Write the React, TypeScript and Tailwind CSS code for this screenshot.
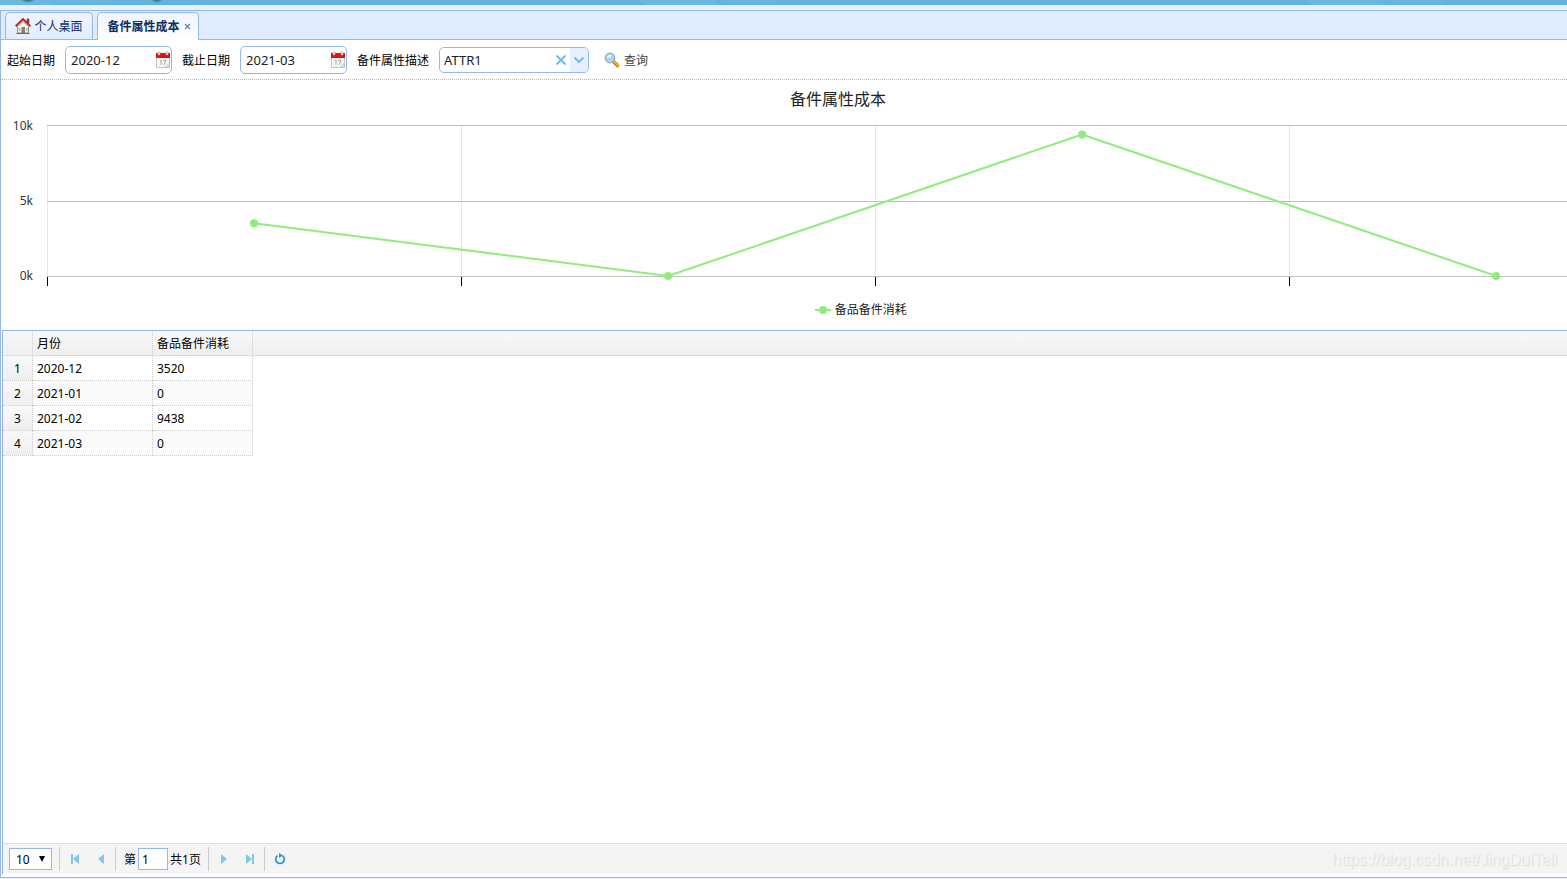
import { useState } from "react";

const rows = [
  { month: "2020-12", cost: 3520 },
  { month: "2021-01", cost: 0 },
  { month: "2021-02", cost: 9438 },
  { month: "2021-03", cost: 0 },
];

/* One category takes this share of the visible plot; the last one runs past the edge. */
const STEP = 27.24;
const PLOT_HEIGHT = 150;

const points = rows.map((row, i) => ({
  x: `${STEP * (i + 0.5)}%`,
  y: 1 + PLOT_HEIGHT - (row.cost / 10000) * PLOT_HEIGHT,
}));

function HomeIcon() {
  return (
    <svg width="16" height="16" viewBox="0 0 16 16" aria-hidden="true">
      <path d="M2.500 8.500v6.500h11V8.500L8 3.500z" fill="#f6f4f0" stroke="#8a8a8a" />
      <path d="M12 1h2v4h-2z" fill="#c0392b" stroke="#8c1b12" strokeWidth=".6" />
      <path d="M4 10h1.500v3H4zM11 10h1.500v3H11z" fill="#b9b3aa" />
      <path d="M6.500 9h3.500v6H6.500z" fill="#8b7d70" />
      <path d="M.7 8.300L8 1.300l7.300 7" fill="none" stroke="#b3261b" strokeWidth="2.200" />
      <path d="M2 8.500L8 2.800l6 5.700" fill="none" stroke="#f3c2b6" strokeWidth=".8" />
      <path d="M1.500 15.500h13" stroke="#666" />
    </svg>
  );
}

function CalendarIcon() {
  return (
    <svg width="16" height="18" viewBox="0 0 16 18" aria-hidden="true">
      <path d="M1.500 5.500h13v11h-13z" fill="#f6f6f6" stroke="#c4c4c4" />
      <path d="M1 2h14v5H1z" fill="#dc1410" />
      <path d="M3 1h2v3H3zM11 1h2v3h-2z" fill="#fff" stroke="#b88" strokeWidth=".6" />
      <path d="M5 9.500l1-.5v5M8 9.500h3l-2 4.500" fill="none" stroke="#aaa" />
      <path d="M10 16.500l4.500-4.500v4.500z" fill="#ddd" stroke="#bbb" strokeWidth=".6" />
    </svg>
  );
}

function SearchIcon() {
  return (
    <svg width="16" height="16" viewBox="0 0 16 16" aria-hidden="true">
      <path d="M9.500 9.500l4 4" stroke="#c07424" strokeWidth="3.600" strokeLinecap="round" />
      <path d="M10 9.500l4 4" stroke="#f4a945" strokeWidth="1.800" strokeLinecap="round" />
      <circle cx="6" cy="6" r="4.800" fill="#a9d4f8" stroke="#9aa9ba" strokeWidth="1.200" />
      <path d="M3 6a3 3 0 0 1 5-2.500C7 5.500 5 6 3 6z" fill="#e6f5ff" />
    </svg>
  );
}

function DateField({ id, label, initial }: { id: string; label: string; initial: string }) {
  const [value, setValue] = useState(initial);
  return (
    <div className="flex items-center gap-2.5">
      <label htmlFor={id} className="pt-0.5">
        {label}
      </label>
      <div className="flex h-7 w-[107px] items-center rounded-[5px] border border-[#95b8e7] bg-white">
        <input
          id={id}
          value={value}
          onChange={(e) => setValue(e.target.value)}
          className="h-full w-0 flex-1 bg-transparent pl-[5px] text-[13px] text-[#222] outline-none"
        />
        <button type="button" aria-label={`选择${label}`}>
          <CalendarIcon />
        </button>
      </div>
    </div>
  );
}

function Toolbar() {
  const [attr, setAttr] = useState("ATTR1");
  return (
    <form
      className="flex h-10 shrink-0 items-center gap-2.5 border-b border-dotted border-[#bbb] pl-1.5"
      onSubmit={(e) => e.preventDefault()}
    >
      <DateField id="start" label="起始日期" initial="2020-12" />
      <DateField id="end" label="截止日期" initial="2021-03" />
      <div className="flex items-center gap-2.5">
        <label htmlFor="attr" className="pt-0.5">
          备件属性描述
        </label>
        <div className="flex h-[26px] w-[150px] items-center overflow-hidden rounded-[5px] border border-[#95b8e7]">
          <input
            id="attr"
            value={attr}
            onChange={(e) => setAttr(e.target.value)}
            className="h-full w-0 flex-1 bg-transparent pl-1 text-[13px] text-[#222] outline-none"
          />
          <button
            type="button"
            aria-label="清除"
            onClick={() => setAttr("")}
            className="flex h-full w-[18px] items-center justify-center"
          >
            <svg width="12" height="12" viewBox="0 0 12 12" aria-hidden="true">
              <path d="M1.500 1.500l9 9M10.500 1.500l-9 9" stroke="#6fbcec" strokeWidth="2" />
            </svg>
          </button>
          <button
            type="button"
            aria-label="展开"
            className="flex h-full w-[18px] items-center justify-center bg-[#e6f0ff]"
          >
            <svg width="12" height="8" viewBox="0 0 12 8" aria-hidden="true">
              <path d="M1.500 1.500L6 6l4.500-4.500" fill="none" stroke="#6fbcec" strokeWidth="2" />
            </svg>
          </button>
        </div>
      </div>
      <button type="submit" className="flex items-center gap-1 pl-[5px] text-[#444]">
        <SearchIcon />
        <span className="pt-0.5">查询</span>
      </button>
    </form>
  );
}

function Chart() {
  return (
    <section className="flex h-[250px] shrink-0 flex-col overflow-hidden">
      <h2 className="w-[106.9%] pt-[7px] text-center text-base leading-6 text-[#222]">备件属性成本</h2>
      <div className="flex pt-3.5">
        <div className="flex h-[151px] w-[46px] flex-col justify-between pt-px pr-3.5 text-right text-[#333]">
          <span className="flex h-0 items-center justify-end">10k</span>
          <span className="flex h-0 items-center justify-end">5k</span>
          <span className="flex h-0 items-center justify-end">0k</span>
        </div>
        <svg height="162" className="w-0 flex-1 overflow-visible" role="img" aria-label="备品备件消耗">
          {[0, 1, 2, 3].map((i) => (
            <g key={i} shapeRendering="crispEdges">
              <line x1={`${STEP * i}%`} x2={`${STEP * i}%`} y1="1" y2="151" stroke="#e6e6e6" />
              <line x1={`${STEP * i}%`} x2={`${STEP * i}%`} y1="151" y2="161" stroke="#000" />
            </g>
          ))}
          {[0, 76, 151].map((y) => (
            <rect key={y} x="0" y={y} width="110%" height="1" fill="#c0c0c0" />
          ))}
          {points.slice(1).map((p, i) => (
            <line
              key={p.x}
              x1={points[i].x}
              y1={points[i].y}
              x2={p.x}
              y2={p.y}
              stroke="#90ed7d"
              strokeWidth="2"
              strokeLinecap="round"
            />
          ))}
          {points.map((p) => (
            <circle key={p.x} cx={p.x} cy={p.y} r="4" fill="#90ed7d" />
          ))}
        </svg>
      </div>
      <div className="flex w-[109.8%] items-center justify-center gap-1 pt-[15px] text-[#222]">
        <svg width="16" height="8" viewBox="0 0 16 8" aria-hidden="true">
          <path d="M0 4h16" stroke="#90ed7d" strokeWidth="2" />
          <circle cx="8" cy="4" r="4" fill="#90ed7d" />
        </svg>
        <span>备品备件消耗</span>
      </div>
    </section>
  );
}

function Grid() {
  return (
    <div className="min-h-0 flex-1 overflow-auto">
      <div className="h-[25px] border-b border-[#ddd] bg-linear-to-b from-[#f9f9f9] to-[#efefef]">
        <table className="table-fixed border-separate border-spacing-0 text-left">
          <colgroup>
            <col className="w-[30px]" />
            <col className="w-[120px]" />
            <col className="w-[100px]" />
          </colgroup>
          <thead>
            <tr className="h-[25px]">
              <th aria-label="序号" className="border-r border-b border-dotted border-r-[#ccc] border-b-transparent p-0" />
              <th className="border-r border-b border-dotted border-r-[#ccc] border-b-transparent px-1 pt-0.5 pb-0 font-normal">
                月份
              </th>
              <th className="border-r border-b border-dotted border-r-[#ccc] border-b-transparent px-1 pt-0.5 pb-0 font-normal">
                备品备件消耗
              </th>
            </tr>
          </thead>
          <tbody>
            {rows.map((row, i) => (
              <tr key={row.month} className="h-[25px] bg-white even:bg-[#fafafa]">
                <td className="border-r border-b border-dotted border-[#ccc] bg-linear-to-b from-[#f9f9f9] to-[#efefef] px-0 pt-0.5 pb-0 text-center">
                  {i + 1}
                </td>
                <td className="border-r border-b border-dotted border-[#ccc] px-1 pt-0.5 pb-0">{row.month}</td>
                <td className="border-r border-b border-dotted border-[#ccc] px-1 pt-0.5 pb-0">{row.cost}</td>
              </tr>
            ))}
          </tbody>
        </table>
      </div>
    </div>
  );
}

function PageButton({ label, d, bar }: { label: string; d: string; bar?: string }) {
  return (
    <button type="button" aria-label={label} className="flex h-[26px] w-[26px] items-center justify-center">
      <svg width="10" height="10" viewBox="0 0 10 10" fill="#84c4ee" aria-hidden="true">
        <path d={d} />
        {bar && <path d={bar} />}
      </svg>
    </button>
  );
}

function Separator() {
  return <span className="h-6 w-px bg-[#ccc]" />;
}

function Pager() {
  const [page, setPage] = useState("1");
  return (
    <nav
      aria-label="分页"
      className="flex h-[31px] shrink-0 items-center border-t border-[#ddd] bg-[#f4f4f4] pl-1.5"
    >
      <div className="relative mr-[7px]">
        <select
          aria-label="每页条数"
          defaultValue="10"
          className="block h-[22px] w-[43px] appearance-none border border-[#95b8e7] bg-white pt-px pl-1.5 text-xs"
        >
          <option>10</option>
          <option>20</option>
          <option>50</option>
        </select>
        <svg
          width="8"
          height="6"
          viewBox="0 0 8 6"
          className="pointer-events-none absolute top-2 right-1.5"
          aria-hidden="true"
        >
          <path d="M1 0h6L4 6z" />
        </svg>
      </div>
      <Separator />
      <div className="flex pr-px pl-0.5">
        <PageButton label="首页" d="M9 0v10L3 5z" bar="M1 0h2v10H1z" />
        <PageButton label="上一页" d="M8 0v10L2 5z" />
      </div>
      <Separator />
      <div className="flex items-center gap-0.5 pr-[7px] pl-2">
        <label htmlFor="page" className="pt-0.5">
          第
        </label>
        <input
          id="page"
          value={page}
          onChange={(e) => setPage(e.target.value)}
          className="h-[22px] w-[30px] border border-[#95b8e7] bg-white px-[3px] outline-none"
        />
        <span className="pt-0.5">共1页</span>
      </div>
      <Separator />
      <div className="flex pr-px pl-0.5">
        <PageButton label="下一页" d="M2 0v10l6-5z" />
        <PageButton label="末页" d="M1 0v10l6-5z" bar="M7 0h2v10H7z" />
      </div>
      <Separator />
      <button type="button" aria-label="刷新" className="flex h-[26px] w-[30px] items-center justify-center">
        <svg width="12" height="12" viewBox="0 0 12 12" aria-hidden="true">
          <path d="M3.500 2.700a4.300 4.300 0 1 0 5 0" fill="none" stroke="#2f94d8" strokeWidth="1.700" />
          <path d="M5 0l4 2.500L5 5z" fill="#2f94d8" />
        </svg>
      </button>
      <span className="ml-auto pt-0.5 pr-2.5 font-['Liberation_Sans',sans-serif] text-base text-[#f4f4f4] [text-shadow:1px_1px_1px_#d8d8d8]">
        https://blog.csdn.net/JingDuiTell
      </span>
    </nav>
  );
}

export default function App() {
  return (
    <div className="flex h-screen flex-col bg-[#e8f1fb] font-['Noto_Sans','Noto_Sans_CJK_SC',sans-serif] text-xs text-black">
      <svg className="block h-[5px] w-full shrink-0 bg-[#62b2de]" aria-hidden="true">
        <defs>
          <radialGradient id="smudge">
            <stop offset="0" stopColor="#244c63" />
            <stop offset="1" stopColor="#244c63" stopOpacity="0" />
          </radialGradient>
        </defs>
        {["0%", "42.500%", "85%"].map((x) => (
          <svg key={x} x={x} y="0" overflow="visible">
            <path d="M-28 0H50l5 5H-19z" fill="#6ab7e1" />
            <path d="M52 0h60v5H56z" fill="#66b5e0" />
          </svg>
        ))}
        <ellipse cx="28" cy="-1" rx="8" ry="4" fill="url(#smudge)" />
        <ellipse cx="157" cy="-1" rx="6" ry="4" fill="url(#smudge)" />
      </svg>
      <main className="mt-[5px] mb-px flex min-h-0 flex-1 flex-col border-y border-l border-[#95b8e7] bg-white">
        <div role="tablist" className="flex h-[29px] shrink-0 items-end gap-1 border-b border-[#95b8e7] bg-[#e0ecff] pl-1">
          <button
            type="button"
            role="tab"
            aria-selected="false"
            className="flex h-[27px] w-[88px] items-center justify-center gap-[3px] rounded-t-[5px] border border-b-0 border-[#95b8e7] bg-linear-to-b from-[#eff5ff] to-[#e0ecff] text-[#0e2d5f]"
          >
            <HomeIcon />
            <span className="pt-0.5">个人桌面</span>
          </button>
          <div className="-mb-px flex h-7 w-[102px] items-center justify-center gap-1 rounded-t-[5px] border border-b-0 border-[#95b8e7] bg-linear-to-b from-[#eff5ff] to-white pl-0.5 text-[#0e2d5f]">
            <button type="button" role="tab" aria-selected="true" className="font-bold">
              备件属性成本
            </button>
            <button type="button" aria-label="关闭">
              <svg width="7" height="7" viewBox="0 0 7 7" aria-hidden="true">
                <path d="M1 1l5 5M6 1L1 6" stroke="#5f83b8" strokeWidth="1.200" />
              </svg>
            </button>
          </div>
        </div>
        <Toolbar />
        <Chart />
        <section className="mb-[3px] ml-px flex min-h-0 flex-1 flex-col border-t border-l border-[#95b8e7]">
          <Grid />
          <Pager />
        </section>
      </main>
    </div>
  );
}
